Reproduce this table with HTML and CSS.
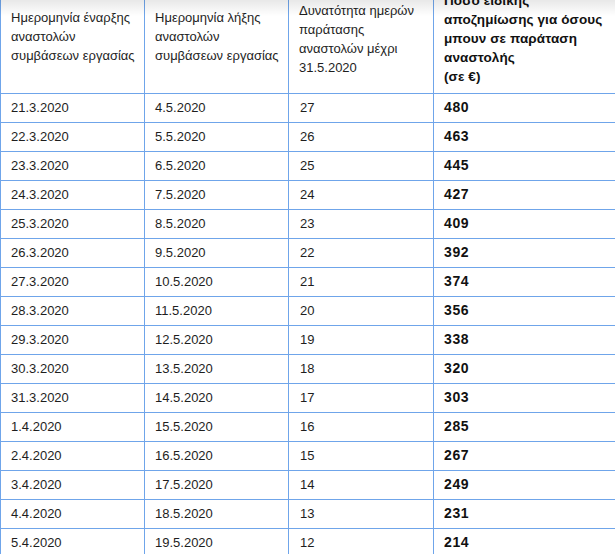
FILE: index.html
```html
<!DOCTYPE html>
<html lang="el">
<head>
<meta charset="utf-8">
<link rel="stylesheet" href="styles.css">
</head>
<body>
<div class="wrap">
<div class="shade"></div>
<table class="grid">
<colgroup>
<col class="c1"><col class="c2"><col class="c3"><col class="c4">
</colgroup>
<thead>
<tr>
<th class="h h-low">Ημερομηνία έναρξης αναστολών συμβάσεων εργασίας</th>
<th class="h h-low">Ημερομηνία λήξης αναστολών συμβάσεων εργασίας</th>
<th class="h">Δυνατότητα ημερών παράτασης αναστολών μέχρι 31.5.2020</th>
<th class="h hb">Ποσό ειδικής αποζημίωσης για όσους μπουν σε παράταση αναστολής<br>(σε €)</th>
</tr>
</thead>
<tbody>
<tr><td>21.3.2020</td><td>4.5.2020</td><td class="n">27</td><td class="b">480</td></tr>
<tr><td>22.3.2020</td><td>5.5.2020</td><td class="n">26</td><td class="b">463</td></tr>
<tr><td>23.3.2020</td><td>6.5.2020</td><td class="n">25</td><td class="b">445</td></tr>
<tr><td>24.3.2020</td><td>7.5.2020</td><td class="n">24</td><td class="b">427</td></tr>
<tr><td>25.3.2020</td><td>8.5.2020</td><td class="n">23</td><td class="b">409</td></tr>
<tr><td>26.3.2020</td><td>9.5.2020</td><td class="n">22</td><td class="b">392</td></tr>
<tr><td>27.3.2020</td><td>10.5.2020</td><td class="n">21</td><td class="b">374</td></tr>
<tr><td>28.3.2020</td><td>11.5.2020</td><td class="n">20</td><td class="b">356</td></tr>
<tr><td>29.3.2020</td><td>12.5.2020</td><td class="n">19</td><td class="b">338</td></tr>
<tr><td>30.3.2020</td><td>13.5.2020</td><td class="n">18</td><td class="b">320</td></tr>
<tr><td>31.3.2020</td><td>14.5.2020</td><td class="n">17</td><td class="b">303</td></tr>
<tr><td>1.4.2020</td><td>15.5.2020</td><td class="n">16</td><td class="b">285</td></tr>
<tr><td>2.4.2020</td><td>16.5.2020</td><td class="n">15</td><td class="b">267</td></tr>
<tr><td>3.4.2020</td><td>17.5.2020</td><td class="n">14</td><td class="b">249</td></tr>
<tr><td>4.4.2020</td><td>18.5.2020</td><td class="n">13</td><td class="b">231</td></tr>
<tr><td>5.4.2020</td><td>19.5.2020</td><td class="n">12</td><td class="b">214</td></tr>
</tbody>
</table>
</div>
</body>
</html>
```

FILE: styles.css
```css
html, body {
  margin: 0;
  padding: 0;
  background: #fff;
  overflow: hidden;
}
.wrap {
  position: relative;
  width: 615px;
  height: 554px;
  overflow: hidden;
}
.shade {
  position: absolute;
  left: 0;
  top: 0;
  width: 615px;
  height: 16px;
  background: linear-gradient(to bottom, rgba(0,0,0,0.09), rgba(0,0,0,0));
  z-index: 2;
  pointer-events: none;
}
.grid {
  width: 615px;
  margin-top: -17px;
  border-collapse: collapse;
  table-layout: fixed;
  font-family: "Liberation Sans", Arial, sans-serif;
  font-size: 13px;
  line-height: 19px;
  color: #1e1e1e;
}
.c1 { width: 144px; }
.c2 { width: 144px; }
.c3 { width: 145px; }
.c4 { width: 182px; }
.grid th, .grid td {
  border: 1px solid #6fa5ea;
  text-align: left;
  vertical-align: middle;
  padding: 0 2px 0 10px;
}
.grid th {
  font-weight: normal;
  padding-top: 7px;
  padding-bottom: 7px;
}
.grid th.h-low {
  padding-top: 5px;
  padding-bottom: 9px;
}
.grid th.hb, .grid td.b {
  font-weight: bold;
  font-size: 13.5px;
  letter-spacing: 0.1px;
  color: #111;
}
.grid td.b {
  font-size: 14px;
  letter-spacing: 0.6px;
}
.grid td {
  height: 26px;
  padding-bottom: 2px;
}
.grid td.n {
  padding-left: 11px;
}
```
